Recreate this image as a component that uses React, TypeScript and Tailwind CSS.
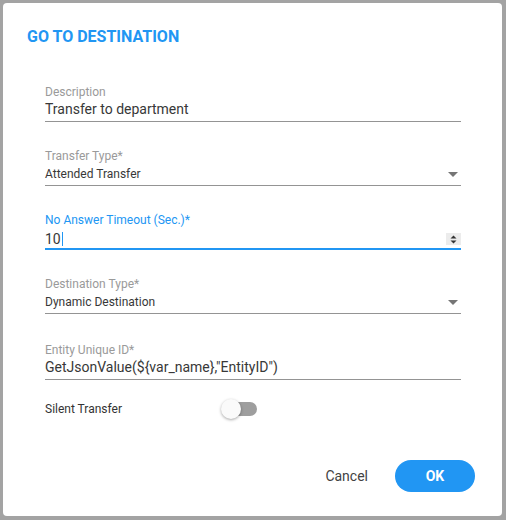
import React from "react";

function Arrow() {
  return (
    <svg width="10" height="5" viewBox="0 0 10 5" className="block">
      <path d="M0 0 L10 0 L5 5 Z" fill="#757575" />
    </svg>
  );
}

function Spinner() {
  return (
    <div className="flex h-[12px] w-[15px] items-center justify-center bg-[#ececec]">
      <svg width="7" height="9" viewBox="0 0 7 9" className="block">
        <path d="M0.5 3.5 L3.5 0.5 L6.5 3.5 Z" fill="#333" />
        <path d="M0.5 5.5 L3.5 8.5 L6.5 5.5 Z" fill="#333" />
      </svg>
    </div>
  );
}

type FieldProps = {
  label: string;
  value: string;
  small?: boolean;
  focused?: boolean;
  right?: React.ReactNode;
  className?: string;
  caret?: boolean;
};

function Field({ label, value, small, focused, right, className, caret }: FieldProps) {
  let rowCls = "border-b border-[#949494] pt-[1px] pb-[3px]";
  if (small) rowCls = "border-b border-[#949494] pt-[2px] pb-[2px]";
  if (focused) rowCls = "border-b-2 border-[#2196f3] pt-[3px] pb-0";
  return (
    <div className={className}>
      <div
        className={`text-[12px] leading-[14px] ${focused ? "text-[#2196f3]" : "text-[#9a9a9a]"}`}
      >
        {label}
      </div>
      <div className={`flex items-center justify-between ${rowCls}`}>
        <div
          className={`${small ? "text-[12px]" : "text-[14px]"} flex items-center leading-[18px] text-[#383838]`}
        >
          {value}
          {caret && <span className="ml-[1px] inline-block h-[14px] w-[1px] bg-[#2196f3]" />}
        </div>
        {right}
      </div>
    </div>
  );
}

export default function App() {
  return (
    <div className="h-[520px] w-[506px] bg-[#a3a3a3] pl-[3px] pt-[3px] pr-[4px] pb-[4px] font-['Roboto',sans-serif]">
      <div className="flex h-full flex-col rounded-[4px] bg-white">
        <div className="pl-[24px] pt-[24px] text-[16px] font-bold leading-[19px] text-[#2196f3]">
          GO TO DESTINATION
        </div>
        <div className="mt-[39px] pl-[42px] pr-[41px]">
          <Field label="Description" value="Transfer to department" />
          <Field
            className="mt-[27px]"
            label="Transfer Type*"
            value="Attended Transfer"
            small
            right={<div className="mr-[3px]"><Arrow /></div>}
          />
          <Field
            className="mt-[27px]"
            label="No Answer Timeout (Sec.)*"
            value="10"
            focused
            caret
            right={<Spinner />}
          />
          <Field
            className="mt-[27px]"
            label="Destination Type*"
            value="Dynamic Destination"
            small
            right={<div className="mr-[3px]"><Arrow /></div>}
          />
          <Field
            className="mt-[29px]"
            label="Entity Unique ID*"
            value={'GetJsonValue(${var_name},"EntityID")'}
          />
          <div className="mt-[19px] flex h-[20px] items-center">
            <div className="w-[176px] text-[12px] leading-[14px] text-[#333]">Silent Transfer</div>
            <div className="relative h-[20px] w-[36px]">
              <div className="absolute left-[2px] top-[3px] h-[14px] w-[34px] rounded-full bg-[#9e9e9e]" />
              <div className="absolute left-0 top-0 h-[20px] w-[20px] rounded-full bg-[#fafafa] shadow-[0_1px_3px_rgba(0,0,0,0.35)]" />
            </div>
          </div>
        </div>
        <div className="mt-[41px] flex items-center justify-end gap-[27px] pr-[27px]">
          <button className="text-[14px] leading-[16px] text-[#424242]">Cancel</button>
          <button className="h-[32px] w-[80px] rounded-full bg-[#2196f3] text-[14px] font-bold text-white">
            OK
          </button>
        </div>
      </div>
    </div>
  );
}
